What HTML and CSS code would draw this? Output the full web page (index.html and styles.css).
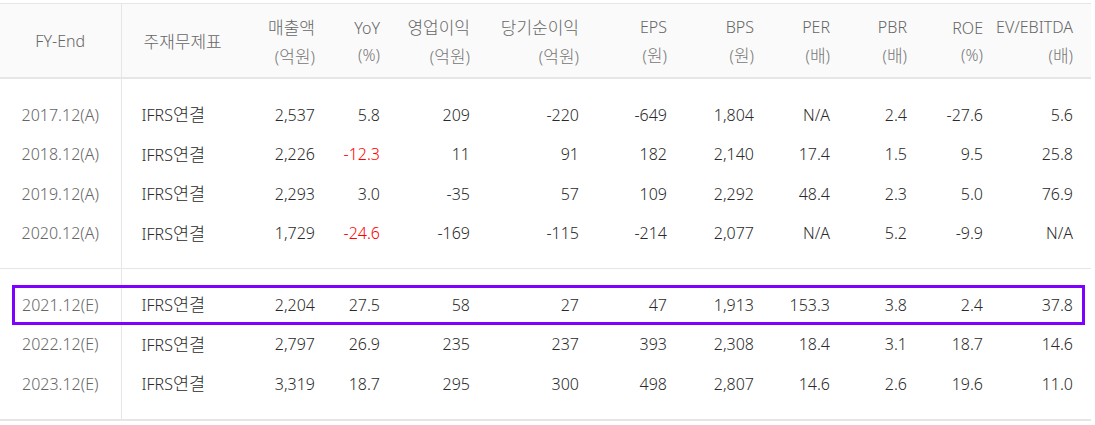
FILE: index.html
```html
<!DOCTYPE html>
<html lang="ko">
<head>
<meta charset="utf-8">
<link rel="stylesheet" href="styles.css">
</head>
<body>
<div class="wrap">
  <table class="fin">
    <colgroup>
      <col class="c0"><col class="c1"><col class="c2"><col class="c3"><col class="c4"><col class="c5">
      <col class="c6"><col class="c7"><col class="c8"><col class="c9"><col class="c10"><col class="c11">
    </colgroup>
    <thead>
      <tr>
        <th class="fy">FY-End</th>
        <th class="std"><span class="ko">주재무제표</span></th>
        <th><span class="ko">매출액</span><br><span class="unit">(<span class="ko">억원</span>)</span></th>
        <th>YoY<br><span class="unit">(%)</span></th>
        <th><span class="ko">영업이익</span><br><span class="unit">(<span class="ko">억원</span>)</span></th>
        <th><span class="ko">당기순이익</span><br><span class="unit">(<span class="ko">억원</span>)</span></th>
        <th>EPS<br><span class="unit">(<span class="ko">원</span>)</span></th>
        <th>BPS<br><span class="unit">(<span class="ko">원</span>)</span></th>
        <th>PER<br><span class="unit">(<span class="ko">배</span>)</span></th>
        <th>PBR<br><span class="unit">(<span class="ko">배</span>)</span></th>
        <th>ROE<br><span class="unit">(%)</span></th>
        <th class="last">EV/EBITDA<br><span class="unit">(<span class="ko">배</span>)</span></th>
      </tr>
    </thead>
    <tbody class="grp">
      <tr class="spacer"><td class="fy"></td><td colspan="11"></td></tr>
      <tr><td class="fy">2017.12(A)</td><td class="std">IFRS<span class="ko">연결</span></td><td>2,537</td><td>5.8</td><td>209</td><td>-220</td><td>-649</td><td>1,804</td><td>N/A</td><td>2.4</td><td>-27.6</td><td class="last">5.6</td></tr>
      <tr><td class="fy">2018.12(A)</td><td class="std">IFRS<span class="ko">연결</span></td><td>2,226</td><td class="neg">-12.3</td><td>11</td><td>91</td><td>182</td><td>2,140</td><td>17.4</td><td>1.5</td><td>9.5</td><td class="last">25.8</td></tr>
      <tr><td class="fy">2019.12(A)</td><td class="std">IFRS<span class="ko">연결</span></td><td>2,293</td><td>3.0</td><td>-35</td><td>57</td><td>109</td><td>2,292</td><td>48.4</td><td>2.3</td><td>5.0</td><td class="last">76.9</td></tr>
      <tr><td class="fy">2020.12(A)</td><td class="std">IFRS<span class="ko">연결</span></td><td>1,729</td><td class="neg">-24.6</td><td>-169</td><td>-115</td><td>-214</td><td>2,077</td><td>N/A</td><td>5.2</td><td>-9.9</td><td class="last">N/A</td></tr>
      <tr class="spacer end"><td class="fy"></td><td colspan="11"></td></tr>
    </tbody>
    <tbody class="grp">
      <tr class="spacer top"><td class="fy"></td><td colspan="11"></td></tr>
      <tr><td class="fy">2021.12(E)</td><td class="std">IFRS<span class="ko">연결</span></td><td>2,204</td><td>27.5</td><td>58</td><td>27</td><td>47</td><td>1,913</td><td>153.3</td><td>3.8</td><td>2.4</td><td class="last">37.8</td></tr>
      <tr><td class="fy">2022.12(E)</td><td class="std">IFRS<span class="ko">연결</span></td><td>2,797</td><td>26.9</td><td>235</td><td>237</td><td>393</td><td>2,308</td><td>18.4</td><td>3.1</td><td>18.7</td><td class="last">14.6</td></tr>
      <tr><td class="fy">2023.12(E)</td><td class="std">IFRS<span class="ko">연결</span></td><td>3,319</td><td>18.7</td><td>295</td><td>300</td><td>498</td><td>2,807</td><td>14.6</td><td>2.6</td><td>19.6</td><td class="last">11.0</td></tr>
      <tr class="spacer bottom"><td class="fy"></td><td colspan="11"></td></tr>
    </tbody>
  </table>
  <div class="highlight"></div>
</div>
</body>
</html>
```

FILE: styles.css
```css
html, body {
  margin: 0;
  padding: 0;
  background: #ffffff;
}

body {
  font-family: "Noto Sans", "Noto Sans CJK KR", sans-serif;
  font-weight: 300;
}

.wrap {
  position: relative;
  padding-top: 3px;
  width: 1091px;
}

.fin {
  width: 1091px;
  table-layout: fixed;
  border-collapse: collapse;
  font-size: 16px;
}

.ko {
  font-family: "Noto Sans CJK KR", sans-serif;
  font-size: 17px;
  font-weight: 300;
}

.fin td .ko {
  font-size: 17.5px;
}

.c0 { width: 121px; }
.c1 { width: 119px; }
.c2 { width: 87px; }
.c3 { width: 65px; }
.c4 { width: 90px; }
.c5 { width: 109px; }
.c6 { width: 88px; }
.c7 { width: 87px; }
.c8 { width: 76px; }
.c9 { width: 77px; }
.c10 { width: 76px; }
.c11 { width: 96px; }

.fin thead tr {
  background: #fafafa;
  border-top: 1px solid #e6e6e6;
  border-bottom: 2px solid #e6e6e6;
}

.fin th {
  height: 71px;
  padding: 2px 12px 0 0;
  text-align: right;
  font-weight: 300;
  color: #666666;
  line-height: 27px;
  vertical-align: middle;
  white-space: nowrap;
}

.fin th .unit {
  color: #777777;
}

.fin td {
  height: 39.5px;
  padding: 0 12px 0 0;
  text-align: right;
  color: #2a2a2a;
  line-height: 20px;
  white-space: nowrap;
  vertical-align: middle;
}

.fin th.fy,
.fin td.fy {
  text-align: center;
  padding: 0;
  border-right: 1px solid #e6e6e6;
  color: #666666;
}

.fin th.fy {
  padding-top: 2px;
}

.fin th.std,
.fin td.std {
  text-align: left;
  padding-left: 20px;
}

.fin th.std {
  padding-left: 22px;
}

.fin .last {
  padding-right: 18px;
}

.fin td.neg {
  color: #ff0000;
}

.fin tr.spacer td {
  height: 16px;
  padding: 0;
}

.fin tr.spacer.end td {
  height: 15px;
  border-bottom: 1px solid #e6e6e6;
}

.fin tr.spacer.top td {
  height: 16px;
}

.fin tr.spacer.bottom td {
  height: 15.5px;
  border-bottom: 2px solid #e6e6e6;
}

.highlight {
  position: absolute;
  left: 12px;
  top: 285px;
  width: 1067px;
  height: 34px;
  border: 3px solid #7f00ff;
  pointer-events: none;
}
```
